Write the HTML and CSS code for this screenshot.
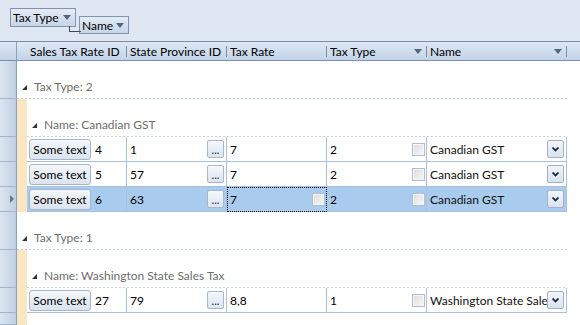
FILE: index.html
```html
<!DOCTYPE html>
<html lang="en">
<head>
<meta charset="UTF-8" />
<title>Sales Tax Rates</title>
<link rel="stylesheet" href="styles.css">
</head>
<body>

<!-- Group panel -->
<div class="group-panel">
  <div class="chip chip-type">Tax Type <span class="arrow"></span></div>
  <div class="chip chip-name">Name <span class="arrow"></span></div>
</div>

<div class="grid">
  <!-- Column headers -->
  <div class="row header">
    <div class="ind"></div>
    <div class="hcell first">Sales Tax Rate ID<span class="sep"></span></div>
    <div class="hcell w100">State Province ID<span class="sep"></span></div>
    <div class="hcell w100">Tax Rate<span class="sep"></span></div>
    <div class="hcell w100">Tax Type<span class="arrow"></span><span class="sep"></span></div>
    <div class="hcell w140">Name<span class="arrow"></span><span class="sep"></span></div>
  </div>

  <!-- Tax Type: 2 -->
  <div class="row group">
    <div class="ind"></div>
    <div class="glabel outer"><svg width="5" height="5"><polygon points="5,0 5,5 0,5" fill="#333"/></svg>Tax Type: 2</div>
  </div>
  <div class="row group">
    <div class="ind"></div>
    <div class="indent"></div>
    <div class="glabel inner"><svg width="5" height="5"><polygon points="5,0 5,5 0,5" fill="#333"/></svg>Name: Canadian GST</div>
  </div>

  <div class="row data">
    <div class="ind"></div>
    <div class="indent"></div>
    <div class="cell w100 id"><span class="btn">Some text</span>4</div>
    <div class="cell w100">1<span class="dots">...</span></div>
    <div class="cell w100">7</div>
    <div class="cell w100">2<span class="check"></span></div>
    <div class="cell w140"><span class="txt">Canadian GST</span><span class="combo"><svg width="7" height="5"><polyline points="0.5,0.5 3.5,3.5 6.5,0.5" fill="none" stroke="#1c2a44" stroke-width="1.8"/></svg></span></div>
  </div>
  <div class="row data">
    <div class="ind"></div>
    <div class="indent"></div>
    <div class="cell w100 id"><span class="btn">Some text</span>5</div>
    <div class="cell w100">57<span class="dots">...</span></div>
    <div class="cell w100">7</div>
    <div class="cell w100">2<span class="check"></span></div>
    <div class="cell w140"><span class="txt">Canadian GST</span><span class="combo"><svg width="7" height="5"><polyline points="0.5,0.5 3.5,3.5 6.5,0.5" fill="none" stroke="#1c2a44" stroke-width="1.8"/></svg></span></div>
  </div>
  <div class="row data selected">
    <div class="ind"><span class="current"></span></div>
    <div class="indent"></div>
    <div class="cell w100 id"><span class="btn">Some text</span>6</div>
    <div class="cell w100">63<span class="dots">...</span></div>
    <div class="cell w100 focused">7<span class="check"></span></div>
    <div class="cell w100">2<span class="check"></span></div>
    <div class="cell w140"><span class="txt">Canadian GST</span><span class="combo"><svg width="7" height="5"><polyline points="0.5,0.5 3.5,3.5 6.5,0.5" fill="none" stroke="#1c2a44" stroke-width="1.8"/></svg></span></div>
  </div>

  <!-- Tax Type: 1 -->
  <div class="row group">
    <div class="ind"></div>
    <div class="glabel outer"><svg width="5" height="5"><polygon points="5,0 5,5 0,5" fill="#333"/></svg>Tax Type: 1</div>
  </div>
  <div class="row group">
    <div class="ind"></div>
    <div class="indent"></div>
    <div class="glabel inner"><svg width="5" height="5"><polygon points="5,0 5,5 0,5" fill="#333"/></svg>Name: Washington State Sales Tax</div>
  </div>

  <div class="row data">
    <div class="ind"></div>
    <div class="indent"></div>
    <div class="cell w100 id"><span class="btn">Some text</span>27</div>
    <div class="cell w100">79<span class="dots">...</span></div>
    <div class="cell w100">8,8</div>
    <div class="cell w100">1<span class="check"></span></div>
    <div class="cell w140"><span class="txt">Washington State Sale</span><span class="combo"><svg width="7" height="5"><polyline points="0.5,0.5 3.5,3.5 6.5,0.5" fill="none" stroke="#1c2a44" stroke-width="1.8"/></svg></span></div>
  </div>

  <div class="row filler">
    <div class="ind"></div>
    <div class="indent"></div>
  </div>
</div>

</body>
</html>
```

FILE: styles.css
```css
/* Base */
* {
  box-sizing: border-box;
}
body {
  margin: 0;
  width: 580px;
  height: 325px;
  overflow: hidden;
  background: #fff;
  font-family: Lato, "Liberation Sans", sans-serif;
  font-size: 12px;
  color: #000;
}

/* Group panel */
.group-panel {
  height: 41px;
  display: flex;
  align-items: flex-start;
  padding-left: 10px;
  background: #dfe7f2;
}
.chip {
  display: flex;
  align-items: center;
  height: 19px;
  padding: 0 4px 0 2px;
  border: 1px solid #8194ae;
  background: linear-gradient(#e4ecf6, #c7d5e7);
}
.chip .arrow {
  margin-left: auto;
}
.chip-type {
  margin-top: 8px;
  width: 66px;
}
.chip-name {
  position: relative;
  margin-top: 16px;
  margin-left: 3px;
  width: 50px;
  height: 18px;
}
.chip-name::before {
  content: "";
  position: absolute;
  left: -11px;
  top: 9px;
  width: 11px;
  height: 5px;
  border-left: 1px solid #3d4a5c;
  border-bottom: 1px solid #3d4a5c;
}
.arrow {
  width: 0;
  height: 0;
  border-left: 4px solid transparent;
  border-right: 4px solid transparent;
  border-top: 5px solid #55667d;
}

/* Grid */
.grid {
  height: 284px;
  display: flex;
  flex-direction: column;
}
.row {
  display: flex;
  flex: none;
}
.ind {
  width: 17px;
  flex: none;
  display: flex;
  align-items: center;
  padding-left: 10px;
  border-right: 1px solid #8ba0bb;
  border-bottom: 1px solid #a3b5cc;
  background: linear-gradient(to right, #dce6f2, #bfcfe3);
}
.current {
  width: 0;
  height: 0;
  border-left: 4px solid #6b7585;
  border-top: 4px solid transparent;
  border-bottom: 4px solid transparent;
}
.indent {
  width: 10px;
  flex: none;
  background: #fbe6c3;
}

/* Header */
.header {
  height: 20px;
  border-top: 1px solid #7f8ea5;
  border-bottom: 1px solid #7990b0;
  background: linear-gradient(#dde8f5, #c3d3e7);
}
.header .ind {
  border-bottom: 0;
  background: transparent;
}
.hcell {
  display: flex;
  align-items: center;
  padding-left: 3px;
  flex: none;
}
.hcell.first {
  width: 110px;
  padding-left: 13px;
}
.hcell .arrow {
  margin-left: auto;
  margin-right: 4px;
}
.sep {
  width: 1px;
  height: 11px;
  margin-left: auto;
  background: #7c8ea8;
}
.hcell .arrow + .sep {
  margin-left: 0;
}
.w100 {
  width: 100px;
}
.w140 {
  width: 140px;
}

/* Group rows */
.group {
  height: 38px;
}
.glabel {
  display: flex;
  align-items: flex-end;
  padding: 0 0 5px 5px;
  line-height: 14px;
  color: #6d6d6d;
  background: repeating-linear-gradient(to right, #c3d1e3 0 2px, transparent 2px 4px) left bottom / 100% 1px no-repeat;
}
.glabel svg {
  margin: 0 7px 4px 0;
}
.glabel.outer {
  width: 550px;
}
.glabel.inner {
  width: 540px;
}

/* Data rows */
.data {
  height: 25px;
}
.cell {
  display: flex;
  align-items: center;
  flex: none;
  padding-left: 3px;
  border-right: 1px solid #a9c1dd;
  border-bottom: 1px solid #a9c1dd;
  white-space: nowrap;
}
.cell.id {
  padding-left: 2px;
  gap: 4px;
}
.selected .cell {
  background: #a9cbee;
}
.focused {
  outline: 1px dotted #000;
  outline-offset: -1px;
}
.btn {
  width: 62px;
  height: 21px;
  display: flex;
  align-items: center;
  justify-content: center;
  border: 1px solid #a5b6cc;
  border-radius: 3px;
  background: linear-gradient(#f4f7fb, #dae3ef);
}
.dots {
  width: 17px;
  height: 18px;
  margin-left: auto;
  margin-right: 2px;
  display: flex;
  justify-content: center;
  align-items: flex-end;
  padding-bottom: 2px;
  font-size: 11px;
  line-height: 1;
  color: #222;
  border: 1px solid #a7b7cc;
  border-radius: 2px;
  background: linear-gradient(#f5f8fc, #dbe4f0);
}
.check {
  width: 13px;
  height: 13px;
  margin-left: auto;
  margin-right: 1px;
  border: 1px solid #aebdd0;
  box-shadow: inset 0 0 0 1px #f6f6f6;
  background: linear-gradient(135deg, #dcdcdc, #f8f8f8);
}
.txt {
  flex: 1;
  min-width: 0;
  color: #111;
}
.combo {
  width: 17px;
  height: 18px;
  flex: none;
  margin: 0 2px 0 2px;
  display: flex;
  align-items: center;
  justify-content: center;
  border: 1px solid #a1b2c8;
  border-radius: 2px;
  background: linear-gradient(#f3f6fa, #d9e2ee);
}

/* Filler under last row */
.filler {
  flex: 1;
}
```
